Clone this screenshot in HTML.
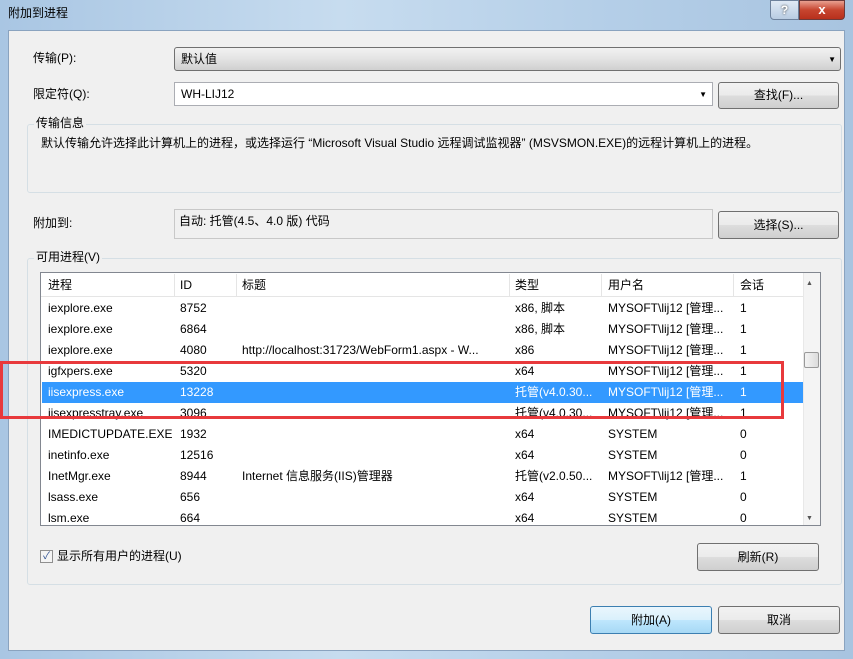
<!DOCTYPE html>
<html><head><meta charset="utf-8"><style>
*{margin:0;padding:0;box-sizing:border-box}
body{width:853px;height:659px;overflow:hidden;position:relative;font-family:"Liberation Sans","Noto Sans CJK SC",sans-serif;font-size:12px;line-height:15px;color:#000;background:linear-gradient(90deg,#a9c6e3,#c7dcef 40%,#b5cfe8 70%,#a8c4e0)}
.a{position:absolute;white-space:nowrap;line-height:15px}
.in{position:absolute;left:8px;top:30px;width:837px;height:621px;background:#f0f0f0;border:1px solid #8aa3bf}
.btn{position:absolute;border:1px solid #707070;border-radius:3px;background:linear-gradient(#f2f2f2 0%,#ebebeb 50%,#dddddd 51%,#cfcfcf 100%);text-align:center;font-size:12px}
.grp{position:absolute;border:1px solid #d5dfe5;border-radius:3px}
.lbl{position:absolute;background:#f0f0f0;padding:0 2px;line-height:15px}
.row{position:absolute;left:41px;width:762px;height:21px}
.row span{position:absolute;top:3px;line-height:15px;white-space:nowrap}
</style></head><body>
<div class="a" style="left:8px;top:6px;font-size:12px">附加到进程</div>
<div class="a" style="left:770px;top:0;width:29px;height:20px;border:1px solid #6d819c;border-radius:0 0 0 4px;background:linear-gradient(#dfe9f5,#b9cce2);color:#fff;text-align:center;font-weight:bold;font-size:12px;line-height:18px;text-shadow:0 0 2px #333">?</div>
<div class="a" style="left:799px;top:0;width:46px;height:20px;border:1px solid #6d3a3a;border-radius:0 0 4px 0;background:linear-gradient(#e8a090,#c7452f 50%,#b8301c);color:#fff;text-align:center;font-weight:bold;font-size:13px;line-height:18px">x</div>
<div class="in"></div>
<div class="a" style="left:33px;top:51px">传输(P):</div>
<div class="a" style="left:174px;top:47px;width:667px;height:24px;border:1px solid #707070;border-radius:3px;background:linear-gradient(#f2f2f2,#e3e3e3 50%,#d0d0d0)"><span class="a" style="left:6px;top:4px">默认值</span><span class="a" style="right:4px;top:4px;font-size:8px">▼</span></div>
<div class="a" style="left:33px;top:87px">限定符(Q):</div>
<div class="a" style="left:174px;top:82px;width:539px;height:24px;border:1px solid #abadb3;background:#fff"><span class="a" style="left:6px;top:4px">WH-LIJ12</span><span class="a" style="right:5px;top:4px;font-size:8px">▼</span></div>
<div class="btn" style="left:718px;top:82px;width:121px;height:27px;line-height:25px">查找(F)...</div>
<div class="grp" style="left:27px;top:124px;width:815px;height:69px"></div>
<div class="lbl" style="left:34px;top:116px">传输信息</div>
<div class="a" style="left:41px;top:136px">默认传输允许选择此计算机上的进程，或选择运行 “Microsoft Visual Studio 远程调试监视器” (MSVSMON.EXE)的远程计算机上的进程。</div>
<div class="a" style="left:33px;top:216px">附加到:</div>
<div class="a" style="left:174px;top:209px;width:539px;height:30px;border:1px solid #c8c8c8;background:#f0f0f0"><span class="a" style="left:4px;top:4px">自动: 托管(4.5、4.0 版) 代码</span></div>
<div class="btn" style="left:718px;top:211px;width:121px;height:28px;line-height:26px">选择(S)...</div>
<div class="grp" style="left:27px;top:258px;width:815px;height:327px"></div>
<div class="lbl" style="left:34px;top:250px">可用进程(V)</div>
<div class="a" style="left:40px;top:272px;width:781px;height:254px;border:1px solid #828790;background:#fff"></div>
<div class="a" style="left:41px;top:273px;width:762px;height:24px;background:#fff;border-bottom:1px solid #e5e5e5"></div>
<div class="a" style="left:174px;top:274px;width:1px;height:22px;background:#e5e5e5"></div>
<div class="a" style="left:236px;top:274px;width:1px;height:22px;background:#e5e5e5"></div>
<div class="a" style="left:509px;top:274px;width:1px;height:22px;background:#e5e5e5"></div>
<div class="a" style="left:601px;top:274px;width:1px;height:22px;background:#e5e5e5"></div>
<div class="a" style="left:733px;top:274px;width:1px;height:22px;background:#e5e5e5"></div>
<div class="row" style="top:275px"><span style="left:7px">进程</span><span style="left:139px">ID</span><span style="left:201px">标题</span><span style="left:474px">类型</span><span style="left:567px">用户名</span><span style="left:699px">会话</span></div>
<div class="a" style="left:42px;top:382px;width:761px;height:21px;background:#3399ff"></div>
<div class="row" style="top:298px"><span style="left:7px">iexplore.exe</span><span style="left:139px">8752</span><span style="left:474px">x86, 脚本</span><span style="left:567px">MYSOFT\lij12 [管理...</span><span style="left:699px">1</span></div>
<div class="row" style="top:319px"><span style="left:7px">iexplore.exe</span><span style="left:139px">6864</span><span style="left:474px">x86, 脚本</span><span style="left:567px">MYSOFT\lij12 [管理...</span><span style="left:699px">1</span></div>
<div class="row" style="top:340px"><span style="left:7px">iexplore.exe</span><span style="left:139px">4080</span><span style="left:201px">http://localhost:31723/WebForm1.aspx - W...</span><span style="left:474px">x86</span><span style="left:567px">MYSOFT\lij12 [管理...</span><span style="left:699px">1</span></div>
<div class="row" style="top:361px"><span style="left:7px">igfxpers.exe</span><span style="left:139px">5320</span><span style="left:474px">x64</span><span style="left:567px">MYSOFT\lij12 [管理...</span><span style="left:699px">1</span></div>
<div class="row" style="top:382px;color:#fff"><span style="left:7px">iisexpress.exe</span><span style="left:139px">13228</span><span style="left:474px">托管(v4.0.30...</span><span style="left:567px">MYSOFT\lij12 [管理...</span><span style="left:699px">1</span></div>
<div class="row" style="top:403px"><span style="left:7px">iisexpresstray.exe</span><span style="left:139px">3096</span><span style="left:474px">托管(v4.0.30...</span><span style="left:567px">MYSOFT\lij12 [管理...</span><span style="left:699px">1</span></div>
<div class="row" style="top:424px"><span style="left:7px">IMEDICTUPDATE.EXE</span><span style="left:139px">1932</span><span style="left:474px">x64</span><span style="left:567px">SYSTEM</span><span style="left:699px">0</span></div>
<div class="row" style="top:445px"><span style="left:7px">inetinfo.exe</span><span style="left:139px">12516</span><span style="left:474px">x64</span><span style="left:567px">SYSTEM</span><span style="left:699px">0</span></div>
<div class="row" style="top:466px"><span style="left:7px">InetMgr.exe</span><span style="left:139px">8944</span><span style="left:201px">Internet 信息服务(IIS)管理器</span><span style="left:474px">托管(v2.0.50...</span><span style="left:567px">MYSOFT\lij12 [管理...</span><span style="left:699px">1</span></div>
<div class="row" style="top:487px"><span style="left:7px">lsass.exe</span><span style="left:139px">656</span><span style="left:474px">x64</span><span style="left:567px">SYSTEM</span><span style="left:699px">0</span></div>
<div class="row" style="top:508px"><span style="left:7px">lsm.exe</span><span style="left:139px">664</span><span style="left:474px">x64</span><span style="left:567px">SYSTEM</span><span style="left:699px">0</span></div>
<div class="a" style="left:803px;top:273px;width:17px;height:252px;background:#f4f4f4;border-left:1px solid #e8e8e8"></div>
<div class="a" style="left:806px;top:276px;font-size:7px;color:#555">▲</div>
<div class="a" style="left:806px;top:511px;font-size:7px;color:#555">▼</div>
<div class="a" style="left:804px;top:352px;width:15px;height:16px;border:1px solid #999;border-radius:2px;background:linear-gradient(90deg,#f3f3f3,#dcdcdc)"></div>
<div class="a" style="left:0;top:361px;width:784px;height:58px;border:3px solid #e8393c"></div>
<div class="a" style="left:40px;top:550px;width:13px;height:13px;border:1px solid #8f8f8f;background:#f4f4f4;font-size:10px;line-height:11px;text-align:center;color:#2a4d8f">✓</div>
<div class="a" style="left:57px;top:549px">显示所有用户的进程(U)</div>
<div class="btn" style="left:697px;top:543px;width:122px;height:28px;line-height:26px">刷新(R)</div>
<div class="btn" style="left:590px;top:606px;width:122px;height:28px;line-height:26px;border-color:#3c7fb1;background:linear-gradient(#eaf6fd,#d9f0fc 50%,#bee6fd 51%,#a7d9f5)">附加(A)</div>
<div class="btn" style="left:718px;top:606px;width:122px;height:28px;line-height:26px">取消</div>
</body></html>
